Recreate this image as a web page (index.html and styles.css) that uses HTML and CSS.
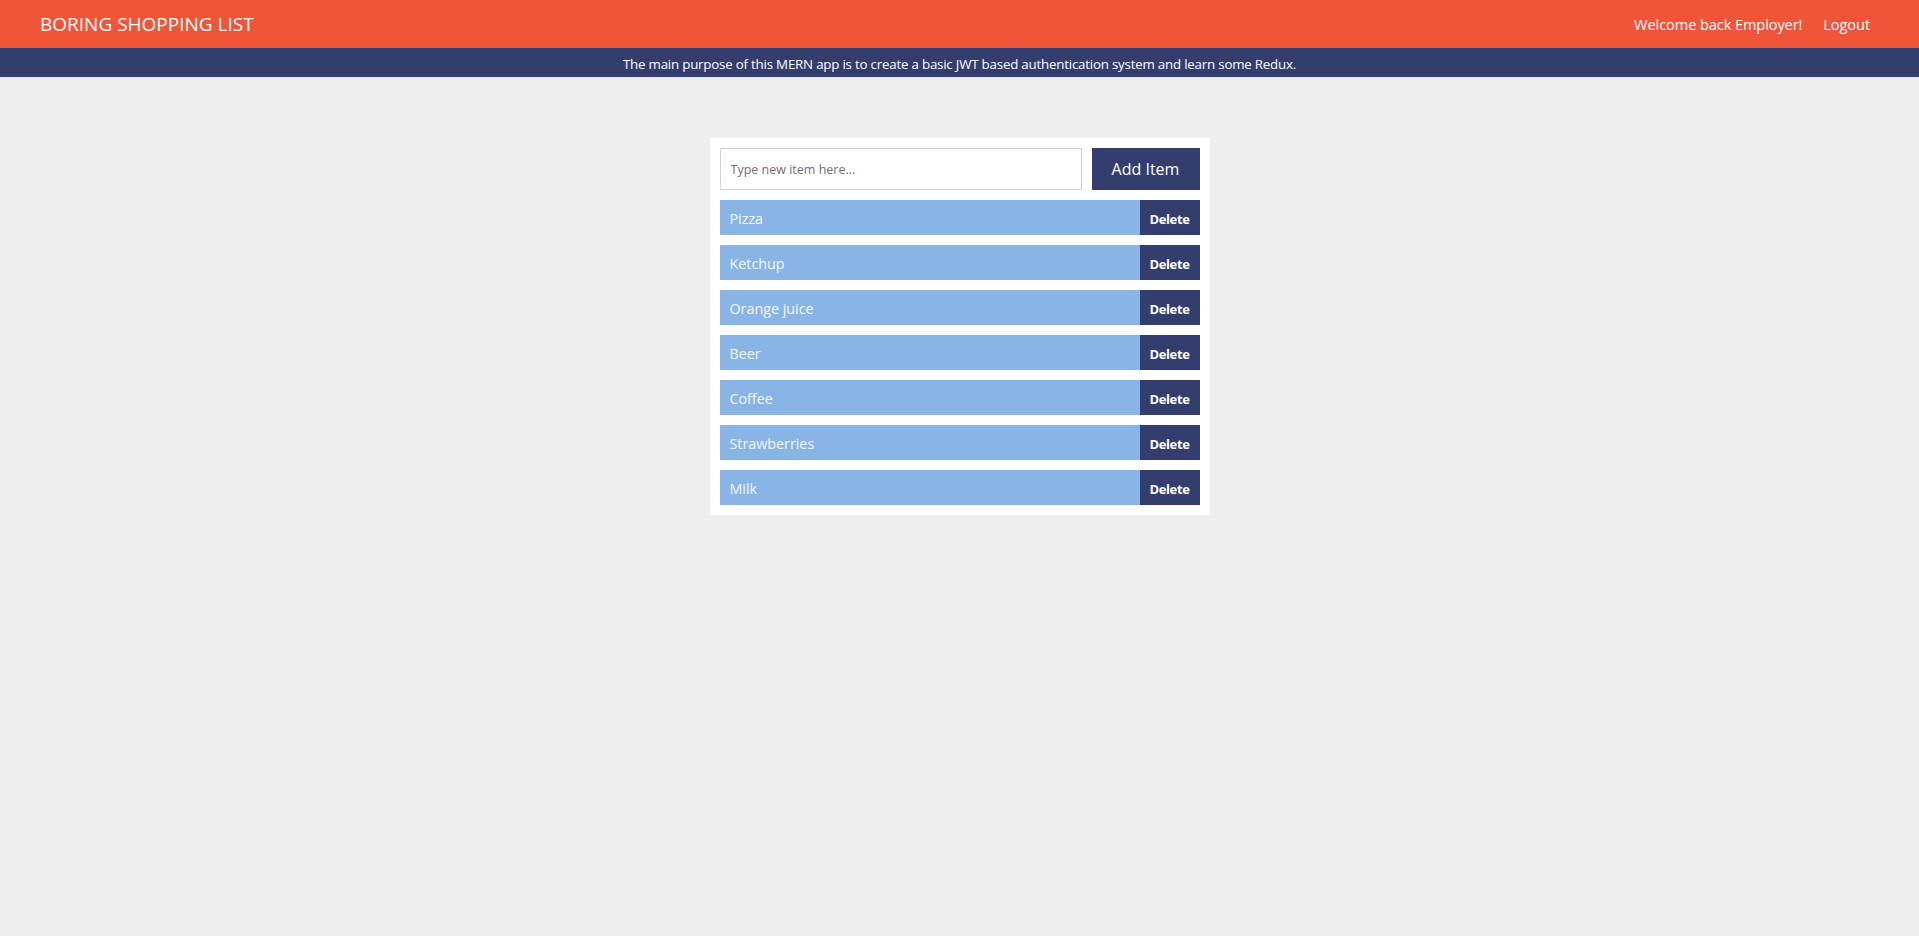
FILE: index.html
```html
<!DOCTYPE html>
<html>
<head>
<meta charset="utf-8">
<link rel="stylesheet" href="styles.css">
</head>
<body>
<header class="topbar">
  <div class="brand">BORING SHOPPING LIST</div>
  <nav class="nav">
    <span class="nav-item">Welcome back Employer!</span>
    <span class="nav-item">Logout</span>
  </nav>
</header>
<div class="banner">The main purpose of this MERN app is to create a basic JWT based authentication system and learn some Redux.</div>
<main class="main">
  <section class="card">
    <form class="add-form">
      <input class="add-input" type="text" placeholder="Type new item here...">
      <button class="add-btn" type="button">Add Item</button>
    </form>
    <ul class="list">
      <li class="row"><span class="row-name">Pizza</span><button class="del-btn" type="button">Delete</button></li>
      <li class="row"><span class="row-name">Ketchup</span><button class="del-btn" type="button">Delete</button></li>
      <li class="row"><span class="row-name">Orange juice</span><button class="del-btn" type="button">Delete</button></li>
      <li class="row"><span class="row-name">Beer</span><button class="del-btn" type="button">Delete</button></li>
      <li class="row"><span class="row-name">Coffee</span><button class="del-btn" type="button">Delete</button></li>
      <li class="row"><span class="row-name">Strawberries</span><button class="del-btn" type="button">Delete</button></li>
      <li class="row"><span class="row-name">Milk</span><button class="del-btn" type="button">Delete</button></li>
    </ul>
  </section>
</main>
</body>
</html>
```
FILE: styles.css
```css
* { box-sizing: border-box; }
html, body {
  margin: 0;
  padding: 0;
  background: #eeeeee;
  font-family: "Open Sans", "Noto Sans", sans-serif;
  min-height: 100%;
}
.topbar {
  height: 48px;
  background: #f0553a;
  color: #fff;
  display: flex;
  align-items: center;
  justify-content: space-between;
  padding: 0 49px 0 40px;
}
.brand {
  font-size: 19px;
}
.nav {
  display: flex;
  gap: 21px;
  font-size: 14.6px;
  letter-spacing: -0.1px;
}
.banner {
  height: 30px;
  background: #333d6e;
  color: #fff;
  font-size: 13.3px;
  display: flex;
  align-items: center;
  justify-content: center;
  letter-spacing: -0.2px;
  padding-top: 2px;
  border-bottom: 1px solid #dfe3ee;
}
.main {
  display: flex;
  justify-content: center;
  padding-top: 60px;
}
.card {
  width: 500px;
  background: #fff;
  padding: 10px;
  display: flex;
  flex-direction: column;
  gap: 10px;
}
.add-form {
  display: flex;
  gap: 10px;
  margin: 0;
}
.add-input {
  flex: 1;
  height: 42px;
  border: 1px solid #d3d3d3;
  padding: 0 10px;
  font-family: "Open Sans", sans-serif;
  font-size: 12.5px;
  outline: none;
}
.add-input::placeholder { color: #7a6a78; }
.add-btn {
  width: 108px;
  height: 42px;
  border: none;
  background: #333d6e;
  color: #fff;
  font-family: "Open Sans", sans-serif;
  font-size: 16px;
  padding: 0;
}
.list {
  list-style: none;
  margin: 0;
  padding: 0;
  display: flex;
  flex-direction: column;
  gap: 10px;
}
.row {
  height: 35px;
  display: flex;
  background: #89b5e6;
  color: #f4f7fc;
}
.row-name {
  flex: 1;
  display: flex;
  align-items: center;
  padding: 2px 0 0 10px;
  font-size: 14.3px;
}
.del-btn {
  width: 60px;
  border: none;
  background: #333d6e;
  color: #fff;
  font-family: "Open Sans", sans-serif;
  font-weight: 700;
  font-size: 13px;
  padding: 2px 0 0;
  letter-spacing: -0.4px;
}
```
